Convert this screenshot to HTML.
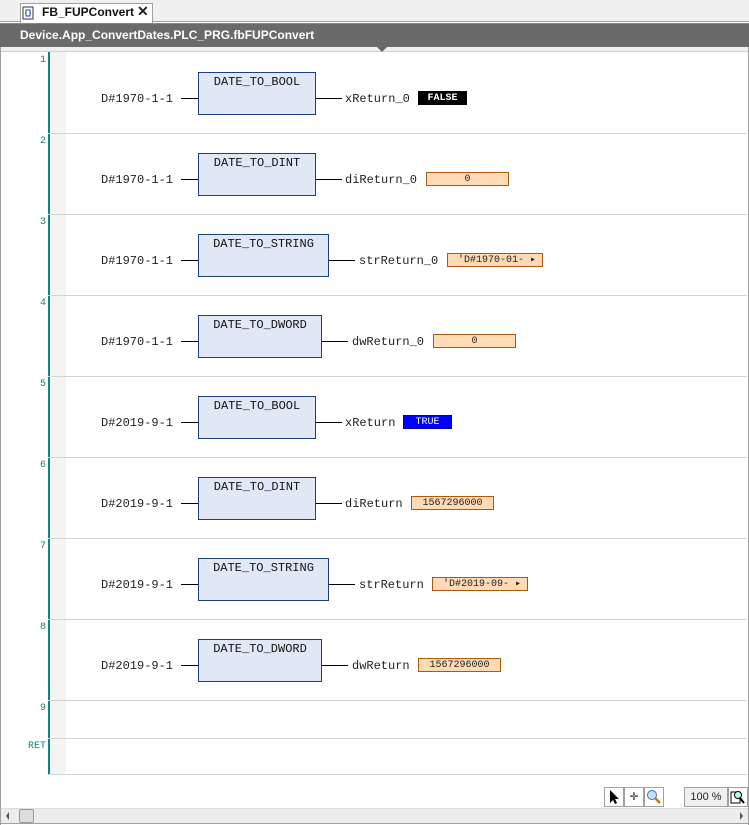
<!DOCTYPE html>
<html><head><meta charset="utf-8"><style>
*{margin:0;padding:0;box-sizing:border-box}
body{width:749px;height:825px;background:#fff;position:relative;overflow:hidden;font-family:"Liberation Mono",monospace;font-size:12px;color:#222}
.a{position:absolute}
.box{position:absolute;background:#e0e8f5;border:1px solid #1f3f78;height:43px;text-align:center;padding-top:2px;font-size:12px;color:#111}
.ln{position:absolute;height:1px;background:#000}
.t{position:absolute;line-height:14px;white-space:pre}
.v{position:absolute;height:14px;background:#ffdab5;border:1px solid #a85a10;font-size:10px;line-height:14px;text-align:center;color:#222}
.sep{position:absolute;left:48px;right:2px;height:1px;background:#d4d4d4}
.num{position:absolute;left:0;width:46px;text-align:right;color:#18807a;font-size:10px}
</style></head><body>
<div class="a" style="left:0;top:0;width:749px;height:22px;background:#f0f0f0;border-bottom:1px solid #a0a0a0"></div>
<div class="a" style="left:20px;top:3px;width:133px;height:20px;background:#fff;border:1px solid #a0a0a0;border-bottom:none"></div>
<svg class="a" style="left:22px;top:6px" width="12" height="14"><rect x="1" y="1" width="10" height="12" fill="#fff" stroke="#333"/><path d="M4 4h4v6h-4zM3 7h1M8 7h1" stroke="#2040c0" fill="none"/></svg>
<div class="a" style="left:42px;top:5px;font-family:'Liberation Sans',sans-serif;font-weight:bold;font-size:12px;color:#111">FB_FUPConvert</div>
<div class="a" style="left:137px;top:3px;font-family:'Liberation Sans',sans-serif;font-weight:bold;font-size:14px">✕</div>
<div class="a" style="left:0;top:23px;width:749px;height:24px;background:#6a6a6a;border-top:1px solid #888"></div>
<div class="a" style="left:20px;top:28px;font-family:'Liberation Sans',sans-serif;font-weight:bold;font-size:12px;color:#fff">Device.App_ConvertDates.PLC_PRG.fbFUPConvert</div>
<div class="a" style="left:0;top:47px;width:749px;height:5px;background:#f0f0f0;border-bottom:1px solid #d0d0d0"></div>
<div class="a" style="left:377px;top:47px;width:0;height:0;border-left:5px solid transparent;border-right:5px solid transparent;border-top:5px solid #666"></div>
<div class="a" style="left:0;top:47px;width:1px;height:778px;background:#a0a0a0"></div>
<div class="a" style="left:748px;top:47px;width:1px;height:778px;background:#a0a0a0"></div>
<div class="a" style="left:50px;top:52px;width:16px;height:722px;background:#f4f4f4"></div>
<div class="a" style="left:48px;top:52px;width:2px;height:722px;background:#108080"></div>

<div class="num" style="top:55px">1</div><div class="num" style="top:136px">2</div><div class="num" style="top:217px">3</div><div class="num" style="top:298px">4</div><div class="num" style="top:379px">5</div><div class="num" style="top:460px">6</div><div class="num" style="top:541px">7</div><div class="num" style="top:622px">8</div><div class="num" style="top:703px">9</div><div class="num" style="top:741px">RET</div>
<div class="sep" style="top:133px"></div><div class="sep" style="top:214px"></div><div class="sep" style="top:295px"></div><div class="sep" style="top:376px"></div><div class="sep" style="top:457px"></div><div class="sep" style="top:538px"></div><div class="sep" style="top:619px"></div><div class="sep" style="top:700px"></div><div class="sep" style="top:738px"></div><div class="sep" style="top:774px"></div>

<div class="t" style="left:101px;top:92px">D#1970-1-1</div><div class="ln" style="left:181px;top:98px;width:17px"></div>
<div class="box" style="left:198px;top:72px;width:118px">DATE_TO_BOOL</div>
<div class="ln" style="left:316px;top:98px;width:26px"></div><div class="t" style="left:345px;top:92px">xReturn_0</div>
<div class="v" style="left:418px;top:91px;width:49px;background:#000;border-color:#000;color:#fff;font-weight:bold">FALSE</div>
<div class="t" style="left:101px;top:173px">D#1970-1-1</div><div class="ln" style="left:181px;top:179px;width:17px"></div>
<div class="box" style="left:198px;top:153px;width:118px">DATE_TO_DINT</div>
<div class="ln" style="left:316px;top:179px;width:26px"></div><div class="t" style="left:345px;top:173px">diReturn_0</div>
<div class="v" style="left:426px;top:172px;width:83px">0</div>
<div class="t" style="left:101px;top:254px">D#1970-1-1</div><div class="ln" style="left:181px;top:260px;width:17px"></div>
<div class="box" style="left:198px;top:234px;width:131px">DATE_TO_STRING</div>
<div class="ln" style="left:329px;top:260px;width:26px"></div><div class="t" style="left:359px;top:254px">strReturn_0</div>
<div class="v" style="left:447px;top:253px;width:96px;text-align:left;padding-left:10px">'D#1970-01- ▸</div>
<div class="t" style="left:101px;top:335px">D#1970-1-1</div><div class="ln" style="left:181px;top:341px;width:17px"></div>
<div class="box" style="left:198px;top:315px;width:124px">DATE_TO_DWORD</div>
<div class="ln" style="left:322px;top:341px;width:26px"></div><div class="t" style="left:352px;top:335px">dwReturn_0</div>
<div class="v" style="left:433px;top:334px;width:83px">0</div>
<div class="t" style="left:101px;top:416px">D#2019-9-1</div><div class="ln" style="left:181px;top:422px;width:17px"></div>
<div class="box" style="left:198px;top:396px;width:118px">DATE_TO_BOOL</div>
<div class="ln" style="left:316px;top:422px;width:26px"></div><div class="t" style="left:345px;top:416px">xReturn</div>
<div class="v" style="left:403px;top:415px;width:49px;background:#0000ff;border-color:#0000a0;color:#fff">TRUE</div>
<div class="t" style="left:101px;top:497px">D#2019-9-1</div><div class="ln" style="left:181px;top:503px;width:17px"></div>
<div class="box" style="left:198px;top:477px;width:118px">DATE_TO_DINT</div>
<div class="ln" style="left:316px;top:503px;width:26px"></div><div class="t" style="left:345px;top:497px">diReturn</div>
<div class="v" style="left:411px;top:496px;width:83px">1567296000</div>
<div class="t" style="left:101px;top:578px">D#2019-9-1</div><div class="ln" style="left:181px;top:584px;width:17px"></div>
<div class="box" style="left:198px;top:558px;width:131px">DATE_TO_STRING</div>
<div class="ln" style="left:329px;top:584px;width:26px"></div><div class="t" style="left:359px;top:578px">strReturn</div>
<div class="v" style="left:432px;top:577px;width:96px;text-align:left;padding-left:10px">'D#2019-09- ▸</div>
<div class="t" style="left:101px;top:659px">D#2019-9-1</div><div class="ln" style="left:181px;top:665px;width:17px"></div>
<div class="box" style="left:198px;top:639px;width:124px">DATE_TO_DWORD</div>
<div class="ln" style="left:322px;top:665px;width:26px"></div><div class="t" style="left:352px;top:659px">dwReturn</div>
<div class="v" style="left:418px;top:658px;width:83px">1567296000</div>

<div class="a" style="left:604px;top:787px;width:20px;height:20px;border:1px solid #a0a0a0;background:#fff"></div>
<svg class="a" style="left:608px;top:789px" width="12" height="16"><path d="M2 1v13l3-3 2 4 2-1-2-4h4z" fill="#000"/></svg>
<div class="a" style="left:624px;top:787px;width:20px;height:20px;border:1px solid #a0a0a0;background:#fff;text-align:center;font-size:14px;line-height:18px">✛</div>
<div class="a" style="left:644px;top:787px;width:20px;height:20px;border:1px solid #a0a0a0;background:#fff"></div>
<svg class="a" style="left:646px;top:789px" width="16" height="16"><circle cx="6" cy="6" r="4.5" fill="#bfe0ff" stroke="#4070b0"/><path d="M9 9l5 5" stroke="#b08020" stroke-width="2.5"/></svg>
<div class="a" style="left:684px;top:787px;width:44px;height:20px;border:1px solid #a0a0a0;background:#f0f0f0;font-family:'Liberation Sans',sans-serif;font-size:11px;text-align:center;line-height:18px">100 %</div>
<div class="a" style="left:728px;top:787px;width:20px;height:20px;border:1px solid #a0a0a0;background:#fff"></div>
<svg class="a" style="left:730px;top:789px" width="16" height="16"><rect x="1" y="3" width="9" height="11" fill="#fff" stroke="#000"/><circle cx="8" cy="6" r="3.5" fill="#bfe" stroke="#000"/><path d="M10 9l4 5" stroke="#000" stroke-width="2"/></svg>
<div class="a" style="left:1px;top:808px;width:747px;height:16px;background:#ececec;border-top:1px solid #ddd;border-bottom:1px solid #a0a0a0"></div>
<div class="a" style="left:19px;top:809px;width:15px;height:14px;background:#ddd;border:1px solid #999;border-radius:2px"></div>
<div class="a" style="left:6px;top:812px;border-top:4px solid transparent;border-bottom:4px solid transparent;border-right:3px solid #555"></div>
<div class="a" style="left:740px;top:812px;border-top:4px solid transparent;border-bottom:4px solid transparent;border-left:3px solid #555"></div>
</body></html>
